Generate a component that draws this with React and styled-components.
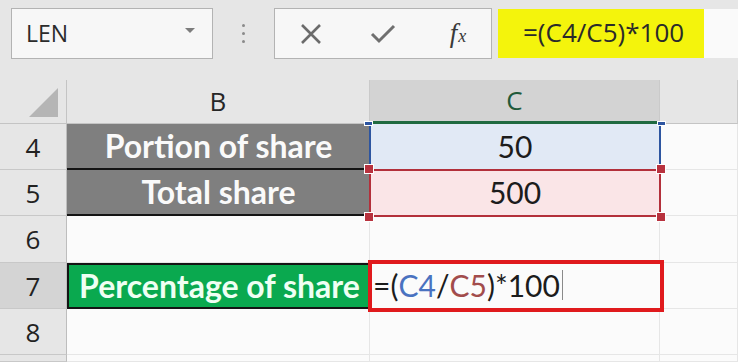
import React from 'react';
import styled, { createGlobalStyle } from 'styled-components';

const GlobalStyle = createGlobalStyle`
  html, body {
    margin: 0;
    padding: 0;
    background: #e6e6e6;
  }
  body {
    font-family: "Open Sans", "Noto Sans", sans-serif;
  }
`;

const Page = styled.div`
  width: 738px;
  height: 362px;
  overflow: hidden;
  background: #e6e6e6;
`;

const Toolbar = styled.div`
  display: flex;
  align-items: flex-start;
  height: 80px;
  padding: 8px 0 0 11px;
  box-sizing: border-box;
`;

const NameBox = styled.div`
  width: 202px;
  height: 51px;
  box-sizing: border-box;
  border: 1px solid #b3b3b3;
  background: #f7f7f7;
  display: flex;
  align-items: center;
  justify-content: space-between;
  padding: 0 17px 2px 14px;
  font-size: 23px;
  color: #2b2b2b;
`;

const DropArrow = styled.span`
  width: 0;
  height: 0;
  border-left: 5px solid transparent;
  border-right: 5px solid transparent;
  border-top: 5px solid #7d7d7d;
  margin-top: -4px;
`;

const Grip = styled.div`
  display: flex;
  flex-direction: column;
  gap: 5px;
  margin: 16px 29px 0;
`;

const Dot = styled.span`
  width: 3px;
  height: 3px;
  border-radius: 50%;
  background: #8a8a8a;
`;

const FnGroup = styled.div`
  display: grid;
  grid-template-columns: repeat(3, 72px);
  height: 51px;
  border: 1px solid #b3b3b3;
  background: #f7f7f7;
  box-sizing: border-box;
`;

const FnButton = styled.div`
  display: flex;
  align-items: center;
  justify-content: center;
  color: #6d6d6d;
`;

const FxLabel = styled.span`
  font-family: "Liberation Serif", "DejaVu Serif", serif;
  font-style: italic;
  font-size: 27px;
  color: #3a3a3a;
  margin-left: 6px;
  sub {
    font-size: 18px;
    vertical-align: baseline;
    margin-left: 1px;
  }
`;

const FormulaBar = styled.div`
  flex: 1;
  display: flex;
  height: 49px;
  margin: 1px 0 0 6px;
  background: #fafafa;
`;

const Highlight = styled.div`
  width: 206px;
  display: flex;
  align-items: center;
  padding: 0 0 3px 25px;
  box-sizing: border-box;
  background: #f4f40c;
  font-size: 26px;
  color: #2a2a2a;
`;

const Sheet = styled.div`
  display: grid;
  grid-template-columns: 67px 303px 290px 1fr;
  grid-template-rows: 44px 46px 46px 47px 46px 46px 1fr;
  height: 282px;
  background: #f9f9f9;
`;

const Corner = styled.div`
  display: flex;
  align-items: flex-end;
  justify-content: flex-end;
  padding: 0 8px 6px 0;
  border-right: 1px solid #c4c4c4;
  border-bottom: 1px solid #c4c4c4;
  background: #e6e6e6;
`;

const Triangle = styled.span`
  width: 0;
  height: 0;
  border-left: 29px solid transparent;
  border-bottom: 29px solid #b5b5b5;
`;

const ColHead = styled.div`
  display: flex;
  align-items: center;
  justify-content: center;
  padding-bottom: 2px;
  font-size: 26px;
  color: ${p => (p.$active ? '#215a3a' : '#262626')};
  background: ${p => (p.$active ? '#d3d3d3' : '#e6e6e6')};
  border-right: 1px solid #cacaca;
  border-bottom: ${p => (p.$active ? '3px solid #1f6a40' : '1px solid #c4c4c4')};
`;

const RowHead = styled.div`
  display: flex;
  align-items: center;
  justify-content: center;
  font-size: 26px;
  color: #222;
  background: ${p => (p.$active ? '#d4d4d4' : '#e6e6e6')};
  border-right: 1px solid #bdbdbd;
  border-bottom: 1px solid #c8c8c8;
`;

const Label = styled.div`
  display: flex;
  align-items: center;
  justify-content: center;
  font-family: Lato, "Open Sans", sans-serif;
  font-weight: 700;
  font-size: 32px;
  color: ${p => (p.$tone === 'green' ? '#effff3' : '#fafafa')};
  background: ${p => (p.$tone === 'green' ? '#0aa94f' : '#7f7f7f')};
  border-bottom: 2px solid #141414;
  border-top: ${p => (p.$tone === 'green' ? '2px solid #141414' : 'none')};
  border-left: ${p => (p.$tone === 'green' ? '2px solid #141414' : 'none')};
  padding-bottom: 2px;
  white-space: nowrap;
`;

const Blank = styled.div`
  background: #fbfbfb;
  border-right: 1px solid #e6e6e6;
  border-bottom: 1px solid #e6e6e6;
`;

const RefCell = styled.div`
  position: relative;
  display: flex;
  align-items: center;
  justify-content: center;
  font-family: Lato, "Open Sans", sans-serif;
  font-size: 30px;
  color: #1c1c1c;
  background: ${p => (p.$tone === 'blue' ? '#e1e9f5' : '#fae5e7')};
  padding-bottom: 2px;
`;

const RangeFrame = styled.span`
  position: absolute;
  top: ${p => (p.$tone === 'blue' ? '0' : '-1px')};
  bottom: -1px;
  left: -1px;
  right: -1px;
  border: 2px solid ${p => (p.$tone === 'blue' ? '#2d55a0' : '#b3303b')};
  border-top-width: ${p => (p.$tone === 'blue' ? '0' : '2px')};
  pointer-events: none;
`;

const Handle = styled.span`
  position: absolute;
  width: ${p => (p.$small ? '7px' : '8px')};
  height: ${p => (p.$small ? '3px' : '8px')};
  background: ${p => (p.$small ? '#2d55a0' : '#b8323e')};
  border: 1.5px solid #fff;
  ${p => (p.$top ? `top: ${p.$small ? '-3px' : '-6px'};` : 'bottom: -6px;')}
  ${p => (p.$left ? 'left: -6px;' : 'right: -6px;')}
`;

const EditCell = styled.div`
  position: relative;
  display: flex;
  align-items: center;
  padding: 0 0 2px 3px;
  font-family: Lato, "Open Sans", sans-serif;
  font-size: 30px;
  color: #1c1c1c;
  background: #fbfbfb;
`;

const Annotation = styled.span`
  position: absolute;
  top: -3px;
  left: -2px;
  right: -4px;
  bottom: -3px;
  border: 4px solid #e01a1d;
  pointer-events: none;
`;

const Ref = styled.span`
  color: ${p => p.$color};
`;

const TextCaret = styled.span`
  display: inline-block;
  width: 1px;
  height: 30px;
  margin-left: 2px;
  background: #8a8a8a;
`;

const CrossIcon = () => (
  <svg width="22" height="20" viewBox="0 0 22 20">
    <path d="M2 1 L20 19 M20 1 L2 19" stroke="#6b6b6b" strokeWidth="2.6" fill="none" />
  </svg>
);

const CheckIcon = () => (
  <svg width="26" height="20" viewBox="0 0 26 20">
    <path d="M2 10 L9 17 L24 2" stroke="#6f6f6f" strokeWidth="3" fill="none" />
  </svg>
);

export default function App() {
  return (
    <Page>
      <GlobalStyle />
      <Toolbar>
        <NameBox>
          LEN
          <DropArrow />
        </NameBox>
        <Grip>
          <Dot />
          <Dot />
          <Dot />
        </Grip>
        <FnGroup>
          <FnButton><CrossIcon /></FnButton>
          <FnButton><CheckIcon /></FnButton>
          <FnButton>
            <FxLabel>f<sub>x</sub></FxLabel>
          </FnButton>
        </FnGroup>
        <FormulaBar>
          <Highlight>=(C4/C5)*100</Highlight>
        </FormulaBar>
      </Toolbar>

      <Sheet>
        <Corner><Triangle /></Corner>
        <ColHead>B</ColHead>
        <ColHead $active>C</ColHead>
        <ColHead />

        <RowHead>4</RowHead>
        <Label>Portion of share</Label>
        <RefCell $tone="blue">
          50
          <RangeFrame $tone="blue" />
          <Handle $small $top $left />
          <Handle $small $top />
        </RefCell>
        <Blank />

        <RowHead>5</RowHead>
        <Label>Total share</Label>
        <RefCell $tone="red">
          500
          <RangeFrame $tone="red" />
          <Handle $top $left />
          <Handle $top />
          <Handle $left />
          <Handle />
        </RefCell>
        <Blank />

        <RowHead>6</RowHead>
        <Blank />
        <Blank />
        <Blank />

        <RowHead $active>7</RowHead>
        <Label $tone="green">Percentage of share</Label>
        <EditCell>
          =(<Ref $color="#4a72c0">C4</Ref>/<Ref $color="#a24c4c">C5</Ref>)*100
          <TextCaret />
          <Annotation />
        </EditCell>
        <Blank />

        <RowHead>8</RowHead>
        <Blank />
        <Blank />
        <Blank />

        <RowHead />
        <Blank />
        <Blank />
        <Blank />
      </Sheet>
    </Page>
  );
}
